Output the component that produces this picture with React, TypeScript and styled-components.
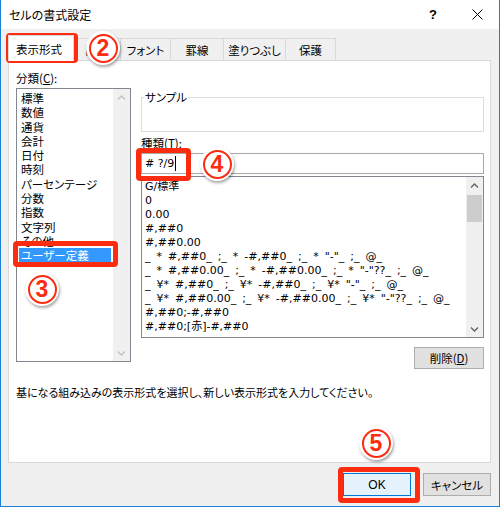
import styled, { createGlobalStyle } from 'styled-components';

const RED = '#fb2c10';
const UI_FONT = `"Noto Sans CJK JP", "Noto Sans", sans-serif`;

const GlobalStyle = createGlobalStyle`
  html, body {
    margin: 0;
    padding: 0;
    background: #fff;
  }
`;

const Window = styled.div`
  position: relative;
  width: 500px;
  height: 507px;
  box-sizing: border-box;
  border: 1px solid #1c7fd6;
  border-top: none;
  background: #f0f0f0;
  display: flex;
  flex-direction: column;
  font-family: ${UI_FONT};
  font-feature-settings: 'palt';
  font-size: 11.5px;
  color: #000;
  overflow: hidden;
`;

const TitleBar = styled.div`
  height: 29px;
  background: #fff;
  display: flex;
  align-items: center;
  padding-left: 8px;
  font-size: 12px;
`;

const TitleText = styled.span`
  flex: 1;
`;

const TitleButton = styled.div`
  width: 44px;
  height: 29px;
  display: flex;
  align-items: center;
  justify-content: center;
  font-family: "Liberation Sans", sans-serif;
  font-size: 13px;
  font-weight: bold;
`;

const Body = styled.div`
  flex: 1;
  display: flex;
  flex-direction: column;
  padding: 0 8px 0 7px;
`;

const TabRow = styled.div`
  height: 31px;
  display: flex;
  align-items: flex-end;
`;

const Tab = styled.div<{ $w: number; $active?: boolean }>`
  position: relative;
  z-index: ${(p) => (p.$active ? 1 : 0)};
  width: ${(p) => p.$w}px;
  height: ${(p) => (p.$active ? 26 : 22)}px;
  margin-left: -1px;
  margin-bottom: ${(p) => (p.$active ? -1 : 0)}px;
  box-sizing: border-box;
  border: 1px solid #d9d9d9;
  border-bottom: none;
  background: ${(p) => (p.$active ? '#fff' : '#f0f0f0')};
  display: flex;
  align-items: center;
  justify-content: ${(p) => (p.$active ? 'flex-start' : 'center')};
  padding-left: ${(p) => (p.$active ? 7 : 0)}px;
  &:first-child {
    margin-left: 0;
  }
`;

const Panel = styled.div`
  height: 403px;
  box-sizing: border-box;
  background: #fff;
  border: 1px solid #d9d9d9;
  padding: 10px 6px 0 7px;
`;

const Columns = styled.div`
  display: grid;
  grid-template-columns: 115px 1fr;
  column-gap: 10px;
  align-items: start;
`;

const Column = styled.div`
  display: flex;
  flex-direction: column;
`;

const Label = styled.div<{ $gap?: number }>`
  line-height: 14px;
  height: 14px;
  margin-top: ${(p) => p.$gap ?? 0}px;
`;

const ListBox = styled.div<{ $h: number; $gap: number }>`
  height: ${(p) => p.$h}px;
  margin-top: ${(p) => p.$gap}px;
  box-sizing: border-box;
  border: 1px solid #828790;
  background: #fff;
  display: flex;
`;

const ListItems = styled.div<{ $pad: number; $top: number }>`
  flex: 1;
  min-width: 0;
  overflow: hidden;
  padding: ${(p) => p.$top}px 0 0 ${(p) => p.$pad}px;
`;

const CategoryItem = styled.div<{ $selected?: boolean }>`
  height: 14.3px;
  line-height: 14.3px;
  margin-right: 2px;
  padding-left: 2px;
  white-space: nowrap;
  background: ${(p) => (p.$selected ? '#3399ff' : 'transparent')};
  color: ${(p) => (p.$selected ? '#fff' : '#000')};
`;

const FormatItem = styled.div`
  height: 14px;
  line-height: 14px;
  white-space: pre;
  font-family: "DejaVu Sans", "Noto Sans CJK JP", sans-serif;
  font-feature-settings: normal;
  font-size: 11px;
  word-spacing: 2.5px;
`;

const ScrollBar = styled.div`
  width: 17px;
  background: #f0f0f0;
  display: flex;
  flex-direction: column;
`;

const ScrollArrow = styled.div`
  height: 17px;
  display: flex;
  align-items: center;
  justify-content: center;
`;

const ScrollTrack = styled.div`
  flex: 1;
  padding: 1px 1px 0;
`;

const ScrollThumb = styled.div`
  height: 27px;
  background: #cdcdcd;
`;

const Fieldset = styled.fieldset`
  margin: 19px 0 0;
  padding: 0 2px;
  height: 42px;
  box-sizing: border-box;
  border: 1px solid #dcdcdc;
  min-width: 0;
`;

const Legend = styled.legend`
  padding: 0 1px;
  line-height: 14px;
  font-size: 11.5px;
`;

const TextInput = styled.div`
  margin-top: 3px;
  height: 21px;
  box-sizing: border-box;
  border: 1px solid #a9a9a9;
  background: #fff;
  display: flex;
  align-items: center;
  padding-left: 3px;
  font-family: "DejaVu Sans", sans-serif;
  font-size: 11px;
  white-space: pre;
`;

const Caret = styled.span`
  display: inline-block;
  width: 1px;
  height: 15px;
  margin-left: 1px;
  background: #000;
`;

const ButtonRow = styled.div<{ $gap: number }>`
  display: flex;
  justify-content: flex-end;
  gap: 12px;
  margin-top: ${(p) => p.$gap}px;
`;

const Button = styled.div<{ $default?: boolean; $w: number; $h: number }>`
  width: ${(p) => p.$w}px;
  height: ${(p) => p.$h}px;
  box-sizing: border-box;
  border: 1px solid ${(p) => (p.$default ? '#0078d7' : '#adadad')};
  background: ${(p) => (p.$default ? '#e5f1fb' : '#e1e1e1')};
  display: flex;
  align-items: center;
  justify-content: center;
  font-size: 11.5px;
`;

const Hint = styled.div`
  margin-top: 16px;
  line-height: 14px;
  font-size: 11px;
  white-space: nowrap;
`;

const Footer = styled.div`
  display: flex;
  justify-content: flex-end;
  gap: 12px;
  padding-top: 10px;
`;

const OkLabel = styled.span`
  font-family: "Liberation Sans", sans-serif;
  font-size: 12px;
`;

const Annotation = styled.div<{ $x: number; $y: number; $w: number; $h: number }>`
  position: absolute;
  left: ${(p) => p.$x}px;
  top: ${(p) => p.$y}px;
  width: ${(p) => p.$w}px;
  height: ${(p) => p.$h}px;
  box-sizing: border-box;
  border: 5px solid ${RED};
  border-radius: 4px;
  pointer-events: none;
`;

const Badge = styled.div<{ $x: number; $y: number }>`
  position: absolute;
  left: ${(p) => p.$x - 17}px;
  top: ${(p) => p.$y - 17}px;
  width: 34px;
  height: 34px;
  border-radius: 50%;
  background: #fff;
  box-shadow: 1px 2px 3px rgba(0, 0, 0, 0.35);
  display: flex;
  align-items: center;
  justify-content: center;
`;

const BadgeRing = styled.div`
  width: 29px;
  height: 29px;
  box-sizing: border-box;
  border: 2.5px solid ${RED};
  border-radius: 50%;
  display: flex;
  align-items: center;
  justify-content: center;
  color: ${RED};
  font-family: "Liberation Sans", sans-serif;
  font-weight: bold;
  font-size: 23px;
  line-height: 1;
`;

function Chevron({ down, color }: { down?: boolean; color: string }) {
  return (
    <svg width="9" height="6" viewBox="0 0 9 6">
      <path
        d={down ? 'M1 1.5 L4.5 5 L8 1.5' : 'M1 4.5 L4.5 1 L8 4.5'}
        fill="none"
        stroke={color}
        strokeWidth="1.3"
      />
    </svg>
  );
}

function CloseIcon() {
  return (
    <svg width="11" height="11" viewBox="0 0 11 11">
      <path d="M0.5 0.5 L10.5 10.5 M10.5 0.5 L0.5 10.5" stroke="#000" strokeWidth="1" />
    </svg>
  );
}

const tabs = [
  { name: '表示形式', w: 66, active: true },
  { name: '配置', w: 48 },
  { name: 'フォント', w: 51 },
  { name: '罫線', w: 54 },
  { name: '塗りつぶし', w: 63 },
  { name: '保護', w: 51 },
];

const categories = [
  '標準', '数値', '通貨', '会計', '日付', '時刻', 'パーセンテージ',
  '分数', '指数', '文字列', 'その他', 'ユーザー定義',
];

const formats = [
  'G/標準',
  '0',
  '0.00',
  '#,##0',
  '#,##0.00',
  '_ * #,##0_ ;_ * -#,##0_ ;_ * "-"_ ;_ @_',
  '_ * #,##0.00_ ;_ * -#,##0.00_ ;_ * "-"??_ ;_ @_',
  '_ ¥* #,##0_ ;_ ¥* -#,##0_ ;_ ¥* "-"_ ;_ @_',
  '_ ¥* #,##0.00_ ;_ ¥* -#,##0.00_ ;_ ¥* "-"??_ ;_ @_',
  '#,##0;-#,##0',
  '#,##0;[赤]-#,##0',
];

const badges = [
  { n: '2', x: 102, y: 48 },
  { n: '3', x: 41, y: 289 },
  { n: '4', x: 216, y: 164 },
  { n: '5', x: 375, y: 443 },
];

export default function App() {
  return (
    <>
      <GlobalStyle />
      <Window>
        <TitleBar>
          <TitleText>セルの書式設定</TitleText>
          <TitleButton>?</TitleButton>
          <TitleButton>
            <CloseIcon />
          </TitleButton>
        </TitleBar>
        <Body>
          <TabRow>
            {tabs.map((t) => (
              <Tab key={t.name} $w={t.w} $active={t.active}>
                {t.name}
              </Tab>
            ))}
          </TabRow>
          <Panel>
            <Columns>
              <Column>
                <Label>
                  分類(<u>C</u>):
                </Label>
                <ListBox $h={274} $gap={3}>
                  <ListItems $pad={2} $top={2}>
                    {categories.map((c) => (
                      <CategoryItem key={c} $selected={c === 'ユーザー定義'}>
                        {c}
                      </CategoryItem>
                    ))}
                  </ListItems>
                  <ScrollBar>
                    <ScrollArrow>
                      <Chevron color="#c2c2c2" />
                    </ScrollArrow>
                    <ScrollTrack />
                    <ScrollArrow>
                      <Chevron down color="#c2c2c2" />
                    </ScrollArrow>
                  </ScrollBar>
                </ListBox>
              </Column>
              <Column>
                <Fieldset>
                  <Legend>サンプル</Legend>
                </Fieldset>
                <Label $gap={4}>
                  種類(<u>T</u>):
                </Label>
                <TextInput>
                  # ?/9
                  <Caret />
                </TextInput>
                <ListBox $h={162} $gap={2}>
                  <ListItems $pad={3} $top={3}>
                    {formats.map((f) => (
                      <FormatItem key={f}>{f}</FormatItem>
                    ))}
                  </ListItems>
                  <ScrollBar>
                    <ScrollArrow>
                      <Chevron color="#606060" />
                    </ScrollArrow>
                    <ScrollTrack>
                      <ScrollThumb />
                    </ScrollTrack>
                    <ScrollArrow>
                      <Chevron down color="#606060" />
                    </ScrollArrow>
                  </ScrollBar>
                </ListBox>
                <ButtonRow $gap={9}>
                  <Button $w={70} $h={22}>
                    削除(<u>D</u>)
                  </Button>
                </ButtonRow>
              </Column>
            </Columns>
            <Hint>基になる組み込みの表示形式を選択し、新しい表示形式を入力してください。</Hint>
          </Panel>
          <Footer>
            <Button $default $w={68} $h={23}>
              <OkLabel>OK</OkLabel>
            </Button>
            <Button $w={68} $h={23}>
              キャンセル
            </Button>
          </Footer>
        </Body>

        <Annotation $x={5} $y={33} $w={72} $h={30} />
        <Annotation $x={12} $y={241} $w={105} $h={26} />
        <Annotation $x={135} $y={148} $w={55} $h={33} />
        <Annotation $x={337} $y={467} $w={82} $h={36} />
        {badges.map((b) => (
          <Badge key={b.n} $x={b.x} $y={b.y}>
            <BadgeRing>{b.n}</BadgeRing>
          </Badge>
        ))}
      </Window>
    </>
  );
}
